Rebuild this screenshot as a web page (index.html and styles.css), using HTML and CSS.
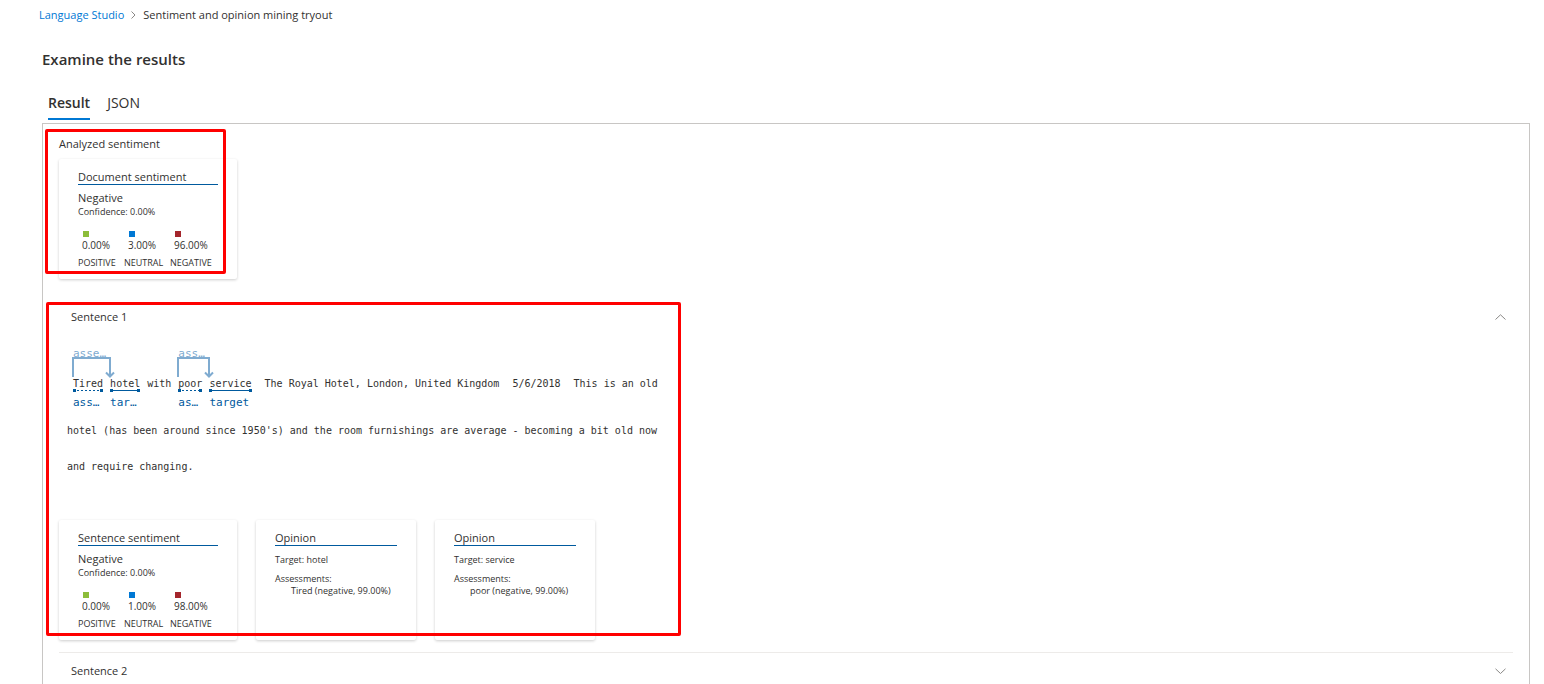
FILE: index.html
```html
<!DOCTYPE html>
<html lang="en">
<head>
<meta charset="utf-8">
<title>Sentiment and opinion mining tryout</title>
<link rel="stylesheet" href="styles.css">
</head>
<body>
<nav class="breadcrumb" aria-label="Breadcrumb">
  <a href="#">Language Studio</a>
  <svg width="5" height="8" viewBox="0 0 5 8" aria-hidden="true"><path d="M.5 .5 4 4 .5 7.500"/></svg>
  <span>Sentiment and opinion mining tryout</span>
</nav>
<main class="main">
  <h1 class="heading">Examine the results</h1>
  <div class="tabs" role="tablist">
    <button class="tab active" role="tab" aria-selected="true">Result</button>
    <button class="tab" role="tab" aria-selected="false">JSON</button>
  </div>
  <div class="panel">
    <h2 class="label">Analyzed sentiment</h2>
    <div class="cards">
      <section class="card sentiment">
        <h3 class="card-title">Document sentiment</h3>
        <p class="verdict">Negative</p>
        <p class="small">Confidence: 0.00%</p>
        <div class="scores">
          <div class="score"><i class="dot positive"></i><b>0.00%</b><span>POSITIVE</span></div>
          <div class="score"><i class="dot neutral"></i><b>3.00%</b><span>NEUTRAL</span></div>
          <div class="score"><i class="dot negative"></i><b>96.00%</b><span>NEGATIVE</span></div>
        </div>
      </section>
    </div>

    <button class="toggle first" aria-expanded="true">Sentence 1
      <svg width="11" height="7" viewBox="0 0 11 7" aria-hidden="true"><path d="M.5 5.500 5.500 .8 10.500 5.500"/></svg>
    </button>
    <div class="sentence">
      <div class="line">
        <div class="pair">
          <span class="relation">asse…</span>
          <svg class="bracket" width="44" height="22" viewBox="0 0 44 22" aria-hidden="true"><path d="M1 20V1H38V19M34 15.500 38 19.500 42 15.500"/></svg>
          <div class="token"><span>Tired</span><i class="mark dotted"></i><em>ass…</em></div>
          <div class="token"><span>hotel</span><i class="mark"></i><em>tar…</em></div>
        </div>
        <span>with</span>
        <div class="pair">
          <span class="relation">ass…</span>
          <svg class="bracket" width="44" height="22" viewBox="0 0 44 22" aria-hidden="true"><path d="M1 20V1H32V19M28 15.500 32 19.500 36 15.500"/></svg>
          <div class="token"><span>poor</span><i class="mark dotted"></i><em>as…</em></div>
          <div class="token"><span>service</span><i class="mark"></i><em>target</em></div>
        </div>
        <span class="phrase">The Royal Hotel, London, United Kingdom</span>
        <span class="phrase">5/6/2018</span>
        <span class="phrase">This is an old</span>
      </div>
      <p class="rest">hotel (has been around since 1950's) and the room furnishings are average - becoming a bit old now and require changing.</p>
    </div>
    <div class="cards">
      <section class="card sentiment">
        <h3 class="card-title">Sentence sentiment</h3>
        <p class="verdict">Negative</p>
        <p class="small">Confidence: 0.00%</p>
        <div class="scores">
          <div class="score"><i class="dot positive"></i><b>0.00%</b><span>POSITIVE</span></div>
          <div class="score"><i class="dot neutral"></i><b>1.00%</b><span>NEUTRAL</span></div>
          <div class="score"><i class="dot negative"></i><b>98.00%</b><span>NEGATIVE</span></div>
        </div>
      </section>
      <section class="card opinion">
        <h3 class="card-title">Opinion</h3>
        <p class="small target">Target: hotel</p>
        <p class="small">Assessments:</p>
        <p class="small indent">Tired (negative, 99.00%)</p>
      </section>
      <section class="card opinion">
        <h3 class="card-title">Opinion</h3>
        <p class="small target">Target: service</p>
        <p class="small">Assessments:</p>
        <p class="small indent">poor (negative, 99.00%)</p>
      </section>
    </div>
    <hr class="rule">
    <button class="toggle" aria-expanded="false">Sentence 2
      <svg width="11" height="7" viewBox="0 0 11 7" aria-hidden="true"><path d="M.5 .8 5.500 5.500 10.500 .8"/></svg>
    </button>
    <div class="callout callout-document"></div>
    <div class="callout callout-sentence"></div>
  </div>
</main>
</body>
</html>
```
FILE: styles.css
```css
* { box-sizing: border-box; }
body {
  margin: 0;
  min-height: 100vh;
  display: flex;
  flex-direction: column;
  background: #fff;
  color: #323130;
  font: 11px/16px "Open Sans", "Noto Sans", sans-serif;
}
h1, h2, h3, p { margin: 0; font-weight: 400; font-size: 11px; }
button { font: inherit; color: inherit; background: none; border: 0; padding: 0; cursor: pointer; }
svg { fill: none; stroke: #8a8886; }

.breadcrumb { display: flex; align-items: center; gap: 7px; padding: 7px 39px 0; }
.breadcrumb a { color: #0078d4; text-decoration: none; }
.main { flex: 1; display: flex; flex-direction: column; padding: 26px 14px 0 42px; }
.heading { font-size: 15px; line-height: 20px; font-weight: 600; }
.tabs { display: flex; gap: 17px; padding: 24px 6px 3px; }
.tab { font-size: 14px; line-height: 20px; padding-bottom: 5px; border-bottom: 2px solid transparent; }
.tab.active { font-weight: 600; border-color: #0078d4; }

.panel { position: relative; flex: 1; border: 1px solid #c8c6c4; border-bottom: 0; padding: 12px 16px 0; }
.label { margin-bottom: 7px; }
.cards { display: flex; gap: 19px; }
.card { height: 120px; padding: 10px 19px 0; border-radius: 2px; box-shadow: 0 1px 3px rgba(0, 0, 0, .2); }
.sentiment { width: 178px; }
.opinion { width: 160px; }
.card-title { line-height: 15px; border-bottom: 1px solid #005a9e; }
.verdict { margin-top: 5px; }
.small { font-size: 9px; line-height: 12px; }
.target { margin: 8px 0 7px; }
.indent { padding-left: 16px; white-space: nowrap; }
.scores { display: grid; grid-template-columns: repeat(3, 46px); margin-top: 13px; }
.score { display: flex; flex-direction: column; font-size: 9px; }
.score b { font-weight: 400; font-size: 10px; padding-left: 4px; margin-bottom: 2px; }
.dot { width: 6px; height: 6px; margin-left: 5px; }
.positive { background: #8cbd3a; }
.neutral { background: #0078d4; }
.negative { background: #a4262c; }

.toggle { display: flex; justify-content: space-between; align-items: center; width: 100%; padding: 10px 7px 10px 12px; text-align: left; }
.toggle.first { margin-top: 20px; }
.rule { height: 1px; border: 0; margin: 12px 0 0; background: #edebe9; }

.sentence { width: 622px; padding: 15px 8px 35px; font: 10px/16px "DejaVu Sans Mono", "Liberation Mono", monospace; }
.line { display: flex; gap: 7px; padding: 26px 0 2px 6px; align-items: flex-start; white-space: nowrap; }
.pair { position: relative; display: flex; gap: 7px; }
.phrase { margin-left: 6px; }
.token { display: flex; flex-direction: column; }
.token em { font-style: normal; font-size: 11px; color: #005a9e; width: 0; padding-top: 3px; }
.relation { position: absolute; left: 0; top: -30px; font-size: 11px; color: #7fabd0; }
.bracket { position: absolute; left: -1px; top: -19px; stroke: #7fabd0; stroke-width: 2; }
.mark { display: flex; justify-content: space-between; height: 3px; margin-top: -3px; background: linear-gradient(#005a9e, #005a9e) center / 100% 1px no-repeat; }
.mark.dotted { background: repeating-linear-gradient(90deg, #005a9e 0 2px, transparent 2px 4px) center / 100% 1px no-repeat; }
.mark::before, .mark::after { content: ""; width: 3px; background: #005a9e; }
.rest { font-size: 10px; line-height: 36px; }

.callout { position: absolute; border: 3px solid #f00; border-radius: 2px; pointer-events: none; }
.callout-document { left: 2px; top: 5px; width: 181px; height: 145px; }
.callout-sentence { left: 3px; top: 178px; width: 635px; height: 334px; }
```
